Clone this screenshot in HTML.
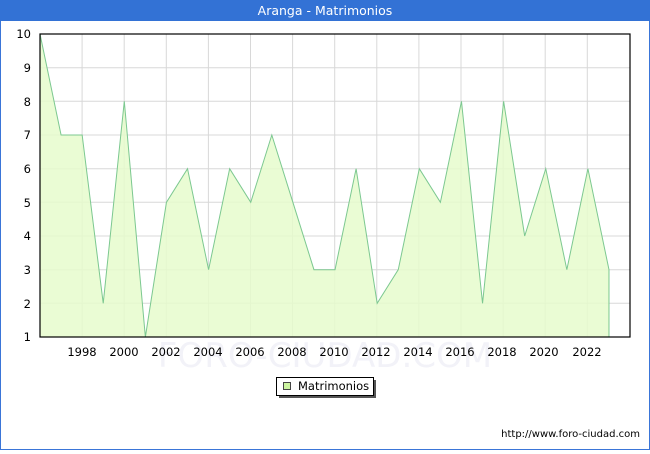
<!DOCTYPE html>
<html><head><style>
body{margin:0;width:650px;height:450px;overflow:hidden;background:#fff;font-family:"DejaVu Sans","Liberation Sans",sans-serif;}
</style></head><body>
<svg width="650" height="450" xmlns="http://www.w3.org/2000/svg" font-family="DejaVu Sans, Liberation Sans, sans-serif">
<rect x="0.5" y="0.5" width="649" height="449" fill="#fff" stroke="#3a75d8"/>
<rect x="0" y="0" width="650" height="21" fill="#3372d5"/>
<text x="325" y="15" fill="#fff" font-size="12.5" text-anchor="middle">Aranga - Matrimonios</text>
<g stroke="#d8d8d8" stroke-width="1">
<line x1="40" x2="630" y1="67.7" y2="67.7"/><line x1="40" x2="630" y1="101.3" y2="101.3"/>
<line x1="40" x2="630" y1="135" y2="135"/><line x1="40" x2="630" y1="168.7" y2="168.7"/>
<line x1="40" x2="630" y1="202.3" y2="202.3"/><line x1="40" x2="630" y1="236" y2="236"/>
<line x1="40" x2="630" y1="269.7" y2="269.7"/><line x1="40" x2="630" y1="303.3" y2="303.3"/>
<line x1="82.1" x2="82.1" y1="34" y2="337"/><line x1="124.2" x2="124.2" y1="34" y2="337"/>
<line x1="166.3" x2="166.3" y1="34" y2="337"/><line x1="208.4" x2="208.4" y1="34" y2="337"/>
<line x1="250.5" x2="250.5" y1="34" y2="337"/><line x1="292.6" x2="292.6" y1="34" y2="337"/>
<line x1="334.7" x2="334.7" y1="34" y2="337"/><line x1="376.8" x2="376.8" y1="34" y2="337"/>
<line x1="418.9" x2="418.9" y1="34" y2="337"/><line x1="461" x2="461" y1="34" y2="337"/>
<line x1="503.1" x2="503.1" y1="34" y2="337"/><line x1="545.2" x2="545.2" y1="34" y2="337"/>
<line x1="587.3" x2="587.3" y1="34" y2="337"/>
</g>
<text x="325" y="367" fill="#f2f2f8" font-size="34" text-anchor="middle">FORO-CIUDAD.COM</text>
<polygon transform="translate(40,0) scale(1.0035,1) translate(-40,0)" fill="#e6fccc" fill-opacity="0.85" stroke="#7cc890" stroke-width="1" points="40,337 40,34 61,135 82,135 103,303.3 124,101.3 145,337 166,202.3 187,168.7 208,269.7 229,168.7 250,202.3 271,135 292,202.3 313,269.7 334,269.7 355,168.7 376,303.3 397,269.7 418,168.7 439,202.3 460,101.3 481,303.3 502,101.3 523,236 544,168.7 565,269.7 586,168.7 607,269.7 607,337"/>
<rect x="40" y="34" width="590" height="303" fill="none" stroke="#000" stroke-width="1.2"/>
<g font-size="11.5" fill="#000" text-anchor="end">
<text x="31" y="38">10</text><text x="31" y="72">9</text><text x="31" y="106">8</text><text x="31" y="139">7</text><text x="31" y="173">6</text><text x="31" y="207">5</text><text x="31" y="240">4</text><text x="31" y="274">3</text><text x="31" y="308">2</text><text x="31" y="341">1</text>
</g>
<g font-size="11.5" fill="#000" text-anchor="middle">
<text x="82" y="356">1998</text><text x="124" y="356">2000</text><text x="166" y="356">2002</text><text x="208" y="356">2004</text><text x="250" y="356">2006</text><text x="292" y="356">2008</text><text x="334" y="356">2010</text><text x="376" y="356">2012</text><text x="418" y="356">2014</text><text x="460" y="356">2016</text><text x="502" y="356">2018</text><text x="544" y="356">2020</text><text x="587" y="356">2022</text>
</g>
<rect x="279" y="380" width="97" height="18" fill="#555"/>
<rect x="276.5" y="377.5" width="97" height="18" fill="#fff" stroke="#000"/>
<rect x="283.5" y="382.5" width="7" height="7" fill="#ccf5a0" stroke="#444"/>
<text x="298" y="390" font-size="11.5" fill="#000">Matrimonios</text>
<text x="640" y="437" font-size="10" fill="#000" text-anchor="end">http://www.foro-ciudad.com</text>
</svg>
</body></html>
